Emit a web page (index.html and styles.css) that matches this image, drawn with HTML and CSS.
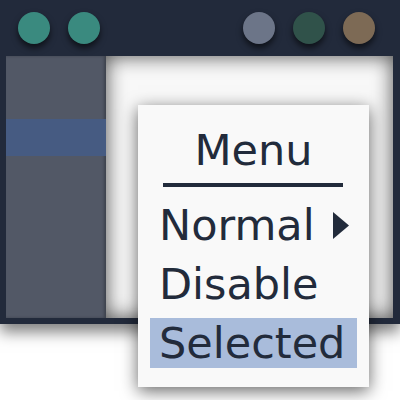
FILE: index.html
```html
<!DOCTYPE html>
<html lang="en">
<head>
    <meta charset="UTF-8">
    <meta name="viewport" content="width=device-width, initial-scale=1.0">
    <title>Menu</title>
    <link rel="stylesheet" href="styles.css">
</head>
<body>
    <div class="window">
        <div class="titlebar">
            <div class="dots">
                <span class="dot teal"></span>
                <span class="dot teal"></span>
            </div>
            <div class="dots">
                <span class="dot slate"></span>
                <span class="dot green"></span>
                <span class="dot tan"></span>
            </div>
        </div>
        <div class="body">
            <div class="sidebar">
                <div class="side-item"></div>
                <div class="side-item active"></div>
            </div>
            <div class="content"></div>
        </div>
    </div>
    <div class="menu">
        <div class="menu-title">Menu</div>
        <div class="menu-rule"></div>
        <div class="menu-item">
            <span>Normal</span>
            <svg class="arrow" width="16" height="27" viewBox="0 0 16 27"><polygon points="0,0 16,13.5 0,27" fill="#222b3b"/></svg>
        </div>
        <div class="menu-item">Disable</div>
        <div class="menu-item selected">Selected</div>
    </div>
</body>
</html>
```

FILE: styles.css
```css
body {
    margin: 0;
    font-family: "DejaVu Sans", sans-serif;
    background-color: #ffffff;
    color: #222b3b;
    width: 400px;
    height: 400px;
    overflow: hidden;
    position: relative;
}
.window {
    background-color: #222a3b;
    width: 400px;
    padding: 0 7px 6px 6px;
    box-sizing: border-box;
    box-shadow: 0 8px 14px rgba(0, 0, 0, 0.5);
}
.titlebar {
    height: 56px;
    display: flex;
    justify-content: space-between;
    align-items: center;
    padding: 0 18px 0 12px;
}
.dots {
    display: flex;
    gap: 18px;
}
.dot {
    width: 32px;
    height: 32px;
    border-radius: 50%;
    box-shadow: 0 4px 6px rgba(0, 0, 0, 0.6);
}
.dot.teal { background-color: #3a8a7f; }
.dot.slate { background-color: #6c7588; }
.dot.green { background-color: #30524a; }
.dot.tan { background-color: #7d6a55; }
.body {
    display: flex;
    height: 262px;
}
.sidebar {
    width: 100px;
    background-color: #525866;
    box-shadow: inset -2px 0 3px rgba(0, 0, 0, 0.25);
}
.side-item {
    height: 37px;
    margin-top: 26px;
}
.side-item:first-child {
    margin-top: 0;
}
.side-item.active {
    background-color: #465b82;
}
.content {
    flex: 1;
    background-color: #f8f8f8;
    box-shadow: inset 0 0 20px rgba(0, 0, 0, 0.7);
}
.menu {
    position: absolute;
    left: 138px;
    top: 105px;
    width: 231px;
    height: 282px;
    box-sizing: border-box;
    padding: 20px 12px 0;
    background-color: #f9f9f9;
    box-shadow: 0 4px 16px rgba(0, 0, 0, 0.6);
    font-size: 43px;
}
.menu-title {
    line-height: 50px;
    text-align: center;
}
.menu-rule {
    height: 4px;
    background-color: #222b3b;
    margin: 8px 14px 13px 13px;
}
.menu-item {
    display: flex;
    justify-content: space-between;
    align-items: center;
    height: 50px;
    line-height: 50px;
    padding: 0 8px 0 9px;
    margin-bottom: 9px;
}
.menu-item.selected {
    background-color: #a9bcdb;
    margin-top: 1px;
}
```
